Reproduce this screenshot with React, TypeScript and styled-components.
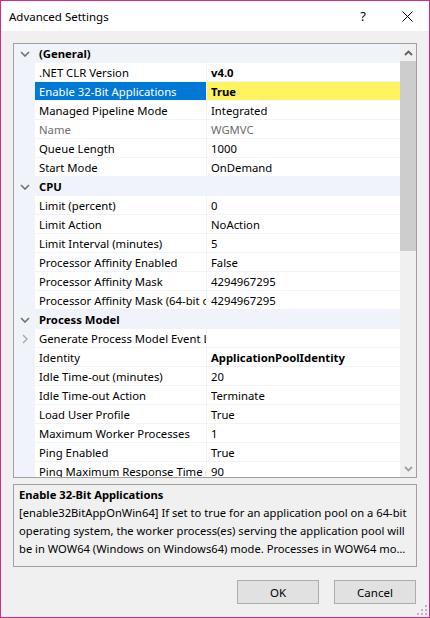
import React from "react";
import styled, { createGlobalStyle } from "styled-components";

const GlobalStyle = createGlobalStyle`
  html, body {
    margin: 0;
    padding: 0;
  }
  body {
    font-family: "Segoe UI", "Noto Sans", "Liberation Sans", sans-serif;
    font-size: 11.3px;
    color: #000;
    background: #fff;
  }
`;

const Window = styled.div`
  position: relative;
  width: 430px;
  height: 618px;
  box-sizing: border-box;
  border: 1px solid #d62a8a;
  background: #f0f0f0;
  display: flex;
  flex-direction: column;
`;

const TitleBar = styled.div`
  height: 30px;
  background: #fff;
  display: flex;
  align-items: center;
  padding-left: 8px;
`;

const Title = styled.div`
  flex: 1;
  font-size: 11.5px;
  color: #000;
`;

const TitleButton = styled.div`
  width: 44px;
  height: 30px;
  display: flex;
  align-items: center;
  justify-content: center;
  font-size: 13px;
  color: #000;
`;

const Content = styled.div`
  flex: 1;
  display: flex;
  flex-direction: column;
  padding: 12px 12px 0 12px;
`;

const Grid = styled.div`
  height: 435px;
  box-sizing: border-box;
  border: 1px solid #a0a0a0;
  background: #fff;
  display: flex;
  overflow: hidden;
`;

const GridBody = styled.div`
  flex: 1;
  display: flex;
  flex-direction: column;
  overflow: hidden;
`;

const Row = styled.div<{ $category?: boolean }>`
  display: grid;
  grid-template-columns: 21px 171px 1px 1fr;
  height: 19px;
  flex-shrink: 0;
  background: ${(p) => (p.$category ? "#f0f3f9" : "#fff")};
`;

const Gutter = styled.div`
  background: #f0f3f9;
  display: flex;
  align-items: center;
  justify-content: center;
`;

const Cell = styled.div<{ $bg?: string; $color?: string; $bold?: boolean }>`
  box-sizing: border-box;
  padding: 1px 0 0 4px;
  line-height: 18px;
  height: 19px;
  border-bottom: 1px solid #f0f3f9;
  white-space: nowrap;
  overflow: hidden;
  background: ${(p) => p.$bg || "transparent"};
  color: ${(p) => p.$color || "#000"};
  font-weight: ${(p) => (p.$bold ? 700 : 400)};
`;

const CategoryCell = styled.div`
  grid-column: 2 / 5;
  padding: 1px 0 0 4px;
  line-height: 18px;
  font-weight: 700;
`;

const Divider = styled.div`
  background: #f0f3f9;
`;

const Scrollbar = styled.div`
  width: 16px;
  background: #f0f0f0;
  display: flex;
  flex-direction: column;
`;

const ScrollArrow = styled.div`
  height: 17px;
  display: flex;
  align-items: center;
  justify-content: center;
`;

const ScrollTrack = styled.div`
  flex: 1;
`;

const Thumb = styled.div`
  height: 190px;
  background: #cdcdcd;
`;

const Description = styled.div`
  margin-top: 6px;
  height: 83px;
  box-sizing: border-box;
  border: 1px solid #a0a0a0;
  padding: 1px 6px 0 5px;
  line-height: 18px;
  font-size: 11.2px;
`;

const DescTitle = styled.div`
  font-weight: 700;
`;

const DescLine = styled.div`
  white-space: nowrap;
  overflow: hidden;
  text-overflow: ellipsis;
`;

const Buttons = styled.div`
  margin-top: 13px;
  display: flex;
  justify-content: flex-end;
  gap: 15px;
  padding-right: 1px;
`;

const Button = styled.button`
  width: 82px;
  height: 24px;
  box-sizing: border-box;
  border: 1px solid #adadad;
  background: #e1e1e1;
  font-family: inherit;
  font-size: 11.5px;
  color: #000;
  padding: 0;
`;

const Grip = styled.svg`
  position: absolute;
  right: 2px;
  bottom: 2px;
`;

const Chevron = ({ open }: { open: boolean }) =>
  open ? (
    <svg width="10" height="6" viewBox="0 0 10 6">
      <path d="M1 1 L5 5 L9 1" fill="none" stroke="#707070" strokeWidth="1.6" />
    </svg>
  ) : (
    <svg width="6" height="10" viewBox="0 0 6 10">
      <path d="M1 1 L5 5 L1 9" fill="none" stroke="#a8a8a8" strokeWidth="1.4" />
    </svg>
  );

type Prop = {
  name: string;
  value: string;
  bold?: boolean;
  readonly?: boolean;
  selected?: boolean;
  expandable?: boolean;
};

type Section = { title: string; items: Prop[] };

const sections: Section[] = [
  {
    title: "(General)",
    items: [
      { name: ".NET CLR Version", value: "v4.0", bold: true },
      { name: "Enable 32-Bit Applications", value: "True", bold: true, selected: true },
      { name: "Managed Pipeline Mode", value: "Integrated" },
      { name: "Name", value: "WGMVC", readonly: true },
      { name: "Queue Length", value: "1000" },
      { name: "Start Mode", value: "OnDemand" },
    ],
  },
  {
    title: "CPU",
    items: [
      { name: "Limit (percent)", value: "0" },
      { name: "Limit Action", value: "NoAction" },
      { name: "Limit Interval (minutes)", value: "5" },
      { name: "Processor Affinity Enabled", value: "False" },
      { name: "Processor Affinity Mask", value: "4294967295" },
      { name: "Processor Affinity Mask (64-bit option)", value: "4294967295" },
    ],
  },
  {
    title: "Process Model",
    items: [
      { name: "Generate Process Model Event Log Entry", value: "", expandable: true },
      { name: "Identity", value: "ApplicationPoolIdentity", bold: true },
      { name: "Idle Time-out (minutes)", value: "20" },
      { name: "Idle Time-out Action", value: "Terminate" },
      { name: "Load User Profile", value: "True" },
      { name: "Maximum Worker Processes", value: "1" },
      { name: "Ping Enabled", value: "True" },
      { name: "Ping Maximum Response Time (seconds)", value: "90" },
    ],
  },
];

const App = () => {
  return (
    <Window>
      <GlobalStyle />
      <TitleBar>
        <Title>Advanced Settings</Title>
        <TitleButton>?</TitleButton>
        <TitleButton>
          <svg width="11" height="11" viewBox="0 0 11 11">
            <path d="M0.5 0.5 L10.5 10.5 M10.5 0.5 L0.5 10.5" stroke="#000" strokeWidth="1" />
          </svg>
        </TitleButton>
      </TitleBar>
      <Content>
        <Grid>
          <GridBody>
            {sections.map((s) => (
              <React.Fragment key={s.title}>
                <Row $category>
                  <Gutter>
                    <Chevron open />
                  </Gutter>
                  <CategoryCell>{s.title}</CategoryCell>
                </Row>
                {s.items.map((it) => (
                  <Row key={it.name}>
                    <Gutter>{it.expandable && <Chevron open={false} />}</Gutter>
                    <Cell
                      $bg={it.selected ? "#0078d7" : undefined}
                      $color={it.selected ? "#fff" : it.readonly ? "#6d6d6d" : undefined}
                    >
                      {it.name}
                    </Cell>
                    <Divider />
                    <Cell
                      $bg={it.selected ? "#fff35f" : undefined}
                      $color={it.readonly ? "#6d6d6d" : undefined}
                      $bold={it.bold}
                    >
                      {it.value}
                    </Cell>
                  </Row>
                ))}
              </React.Fragment>
            ))}
          </GridBody>
          <Scrollbar>
            <ScrollArrow>
              <svg width="9" height="6" viewBox="0 0 9 6">
                <path d="M1 5 L4.5 1.5 L8 5" fill="none" stroke="#606060" strokeWidth="1.8" />
              </svg>
            </ScrollArrow>
            <ScrollTrack>
              <Thumb />
            </ScrollTrack>
            <ScrollArrow>
              <svg width="9" height="6" viewBox="0 0 9 6">
                <path d="M1 1 L4.5 4.5 L8 1" fill="none" stroke="#a0a0a0" strokeWidth="1.8" />
              </svg>
            </ScrollArrow>
          </Scrollbar>
        </Grid>
        <Description>
          <DescTitle>Enable 32-Bit Applications</DescTitle>
          <DescLine>[enable32BitAppOnWin64] If set to true for an application pool on a 64-bit</DescLine>
          <DescLine>operating system, the worker process(es) serving the application pool will</DescLine>
          <DescLine>
            be in WOW64 (Windows on Windows64) mode. Processes in WOW64 mode are 32-bit processes that load only 32-bit applications.
          </DescLine>
        </Description>
        <Buttons>
          <Button>OK</Button>
          <Button>Cancel</Button>
        </Buttons>
      </Content>
      <Grip width="10" height="10" viewBox="0 0 10 10">
        <rect x="8" y="0" width="2" height="2" fill="#b8b8b8" />
        <rect x="4" y="4" width="2" height="2" fill="#b8b8b8" />
        <rect x="8" y="4" width="2" height="2" fill="#b8b8b8" />
        <rect x="0" y="8" width="2" height="2" fill="#b8b8b8" />
        <rect x="4" y="8" width="2" height="2" fill="#b8b8b8" />
        <rect x="8" y="8" width="2" height="2" fill="#b8b8b8" />
      </Grip>
    </Window>
  );
};

export default App;
